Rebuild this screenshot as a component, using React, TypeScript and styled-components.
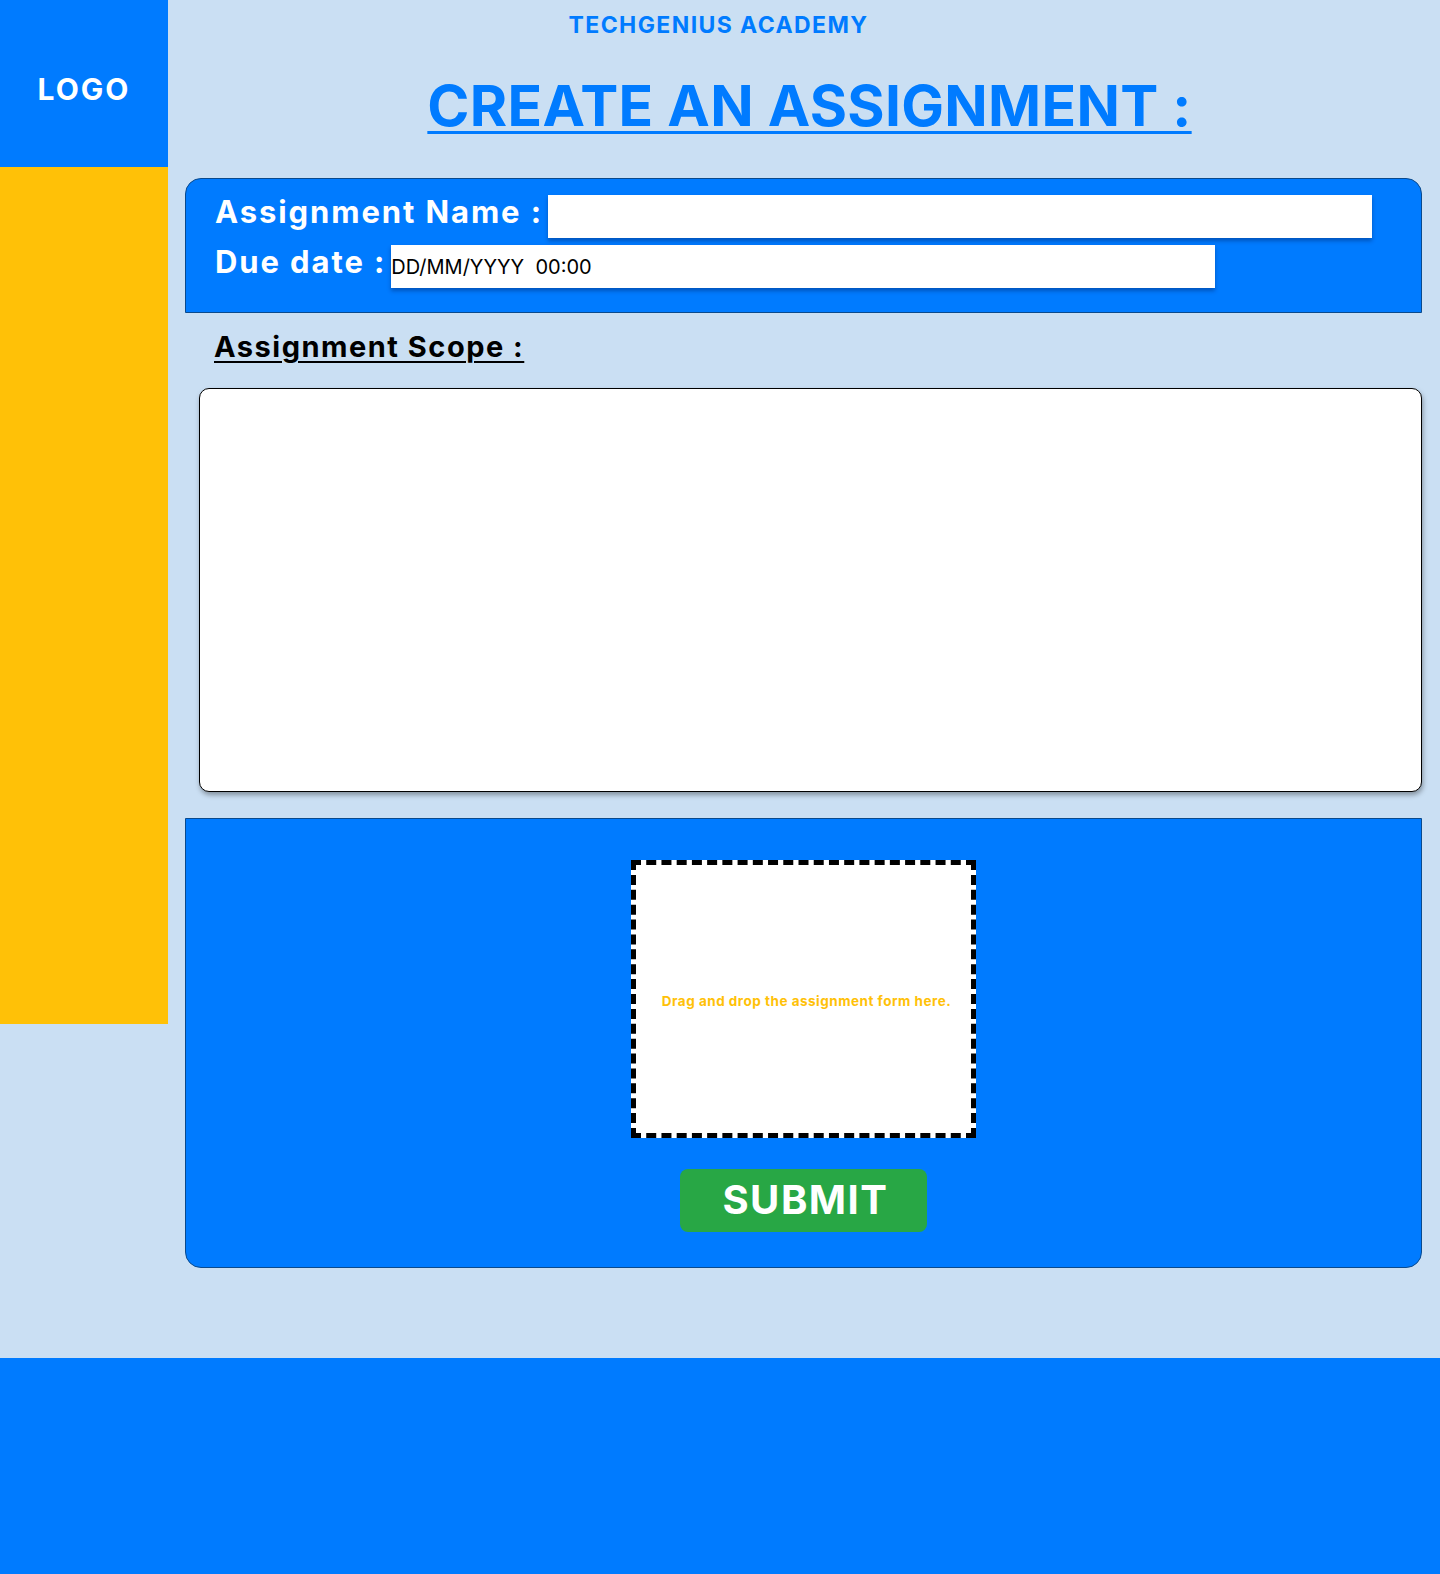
import React from "react";
import styled, { createGlobalStyle } from "styled-components";

const Global = createGlobalStyle`
  html, body { margin: 0; padding: 0; }
  body {
    background: #cadff3;
    font-family: Inter, "Open Sans", sans-serif;
  }
  * { box-sizing: border-box; }
`;

const Page = styled.div`
  display: flex;
  flex-direction: column;
  min-height: 1574px;
`;

const Top = styled.div`
  display: flex;
  align-items: flex-start;
`;

const Sidebar = styled.aside`
  width: 168px;
  flex: 0 0 168px;
  height: 1024px;
  display: flex;
  flex-direction: column;
  background: #ffc107;
`;

const LogoBox = styled.div`
  height: 167px;
  background: #007bff;
  display: flex;
  align-items: center;
  justify-content: center;
  color: #fff;
  font-weight: 700;
  font-size: 30px;
  letter-spacing: 2px;
  padding-top: 11px;
`;

const Main = styled.main`
  flex: 1;
  display: flex;
  flex-direction: column;
  padding: 0 18px 0 17px;
`;

const Brand = styled.div`
  height: 49px;
  display: flex;
  align-items: center;
  justify-content: center;
  padding-right: 170px;
  color: #007bff;
  font-weight: 700;
  font-size: 23px;
  letter-spacing: 1.4px;
`;

const Title = styled.h1`
  margin: 0;
  height: 129px;
  display: flex;
  align-items: center;
  justify-content: center;
  padding: 0 0 16px 12px;
  color: #007bff;
  font-weight: 700;
  font-size: 57px;
  letter-spacing: 0.3px;
  text-decoration: underline;
  text-decoration-thickness: 3px;
  text-underline-offset: 5px;
`;

const TopPanel = styled.section`
  background: #007bff;
  border: 1px solid #0b4a8c;
  border-radius: 16px 16px 0 0;
  padding: 16px 30px 24px 29px;
  display: flex;
  flex-direction: column;
  gap: 7px;
`;

const FieldRow = styled.div`
  display: flex;
  align-items: center;
`;

const Label = styled.label`
  color: #fff;
  font-weight: 700;
  font-size: 31px;
  letter-spacing: 1.9px;
  white-space: nowrap;
  margin-right: 5px;
  position: relative;
  top: -5px;
`;

const TextInput = styled.div`
  width: 824px;
  height: 43px;
  background: #fff;
  box-shadow: 0 3px 4px rgba(0, 40, 110, 0.45);
  display: flex;
  align-items: center;
  font-size: 20px;
  color: #000;
`;

const ScopeLabel = styled.h2`
  margin: 0;
  height: 75px;
  display: flex;
  align-items: center;
  padding: 0 0 8px 29px;
  font-weight: 700;
  font-size: 29px;
  letter-spacing: 1.5px;
  color: #000;
  text-decoration: underline;
  text-decoration-thickness: 2px;
  text-underline-offset: 4px;
`;

const ScopeArea = styled.div`
  margin-left: 14px;
  height: 404px;
  background: #fff;
  border: 1px solid #000;
  border-radius: 10px;
  box-shadow: 1px 3px 5px rgba(0, 0, 0, 0.35);
`;

const UploadPanel = styled.section`
  margin-top: 26px;
  height: 450px;
  background: #007bff;
  border: 1px solid #0b4a8c;
  border-radius: 0 0 16px 16px;
  padding-top: 41px;
  display: flex;
  flex-direction: column;
  align-items: center;
`;

const DropZone = styled.div`
  width: 345px;
  height: 278px;
  background: #fff;
  border: 5px dashed #000;
  display: flex;
  align-items: center;
  justify-content: center;
  color: #ffc107;
  font-weight: 700;
  font-size: 13.5px;
  letter-spacing: 0.5px;
  padding: 4px 0 0 6px;
`;

const Submit = styled.button`
  margin-top: 31px;
  width: 247px;
  height: 63px;
  background: #28a745;
  border: none;
  border-radius: 8px;
  color: #fff;
  font-family: inherit;
  font-weight: 700;
  font-size: 40px;
  letter-spacing: 1.5px;
  display: flex;
  align-items: center;
  justify-content: center;
  padding: 0 0 2px 4px;
`;

const Footer = styled.footer`
  margin-top: 90px;
  height: 216px;
  background: #007bff;
`;

export default function App() {
  return (
    <>
      <Global />
      <Page>
        <Top>
          <Sidebar>
            <LogoBox>LOGO</LogoBox>
          </Sidebar>
          <Main>
            <Brand>TECHGENIUS ACADEMY</Brand>
            <Title>CREATE AN ASSIGNMENT :</Title>
            <TopPanel>
              <FieldRow>
                <Label>Assignment Name :</Label>
                <TextInput />
              </FieldRow>
              <FieldRow>
                <Label>Due date :</Label>
                <TextInput>DD/MM/YYYY&nbsp;&nbsp;00:00</TextInput>
              </FieldRow>
            </TopPanel>
            <ScopeLabel>Assignment Scope :</ScopeLabel>
            <ScopeArea />
            <UploadPanel>
              <DropZone>Drag and drop the assignment form here.</DropZone>
              <Submit>SUBMIT</Submit>
            </UploadPanel>
          </Main>
        </Top>
        <Footer />
      </Page>
    </>
  );
}
